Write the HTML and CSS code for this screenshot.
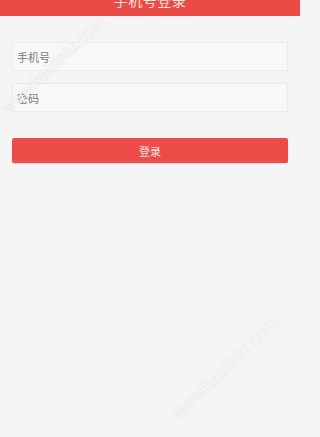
FILE: index.html
```html
<!DOCTYPE html>
<html lang="zh">
<head>
<meta charset="utf-8">
<title>手机号登录</title>
<link rel="stylesheet" href="styles.css">
</head>
<body>
<div class="page">
  <header class="topbar"><span class="title">手机号登录</span></header>
  <form class="form">
    <div class="field"><input class="input" type="text" placeholder="手机号"></div>
    <div class="field"><input class="input" type="password" placeholder="密码"></div>
    <button class="btn" type="button">登录</button>
  </form>
  <span class="wm wm1">www.kaixinlu.com</span>
  <span class="wm wm2">www.kaixinlu.com</span>
</div>
</body>
</html>
```
FILE: styles.css
```css
* { box-sizing: border-box; }
html, body { margin: 0; padding: 0; }
body {
  width: 300px;
  height: 437px;
  overflow: hidden;
  background: #f5f5f5;
  font-family: "Noto Sans CJK SC", "Noto Sans", sans-serif;
}
.page {
  position: relative;
  height: 437px;
  overflow: hidden;
}
.topbar {
  height: 16px;
  background: #ea4b46;
  display: flex;
  justify-content: center;
  overflow: hidden;
}
.title {
  color: #fbe4e2;
  font-size: 14px;
  line-height: 14px;
  margin-top: -7px;
  letter-spacing: 0.5px;
}
.form {
  display: flex;
  flex-direction: column;
  padding: 26px 12px 0;
}
.field { margin-bottom: 12px; }
.input {
  display: block;
  width: 100%;
  height: 29px;
  border: 1px solid #ebebeb;
  background: #f8f8f8;
  padding: 0 4px;
  font-family: inherit;
  font-size: 11px;
  outline: none;
}
.input::placeholder { color: #7a7a7a; }
.btn {
  margin-top: 14px;
  height: 25px;
  border: none;
  border-radius: 2px;
  background: #ed4c48;
  color: #fbe3e1;
  font-family: inherit;
  font-size: 11px;
  box-shadow: 0 1px 1px rgba(0,0,0,0.12);
}
.wm {
  position: absolute;
  font-family: "Liberation Sans", Arial, sans-serif;
  color: #fafafa;
  text-shadow: 0 0 1px #c4c4c4;
  white-space: nowrap;
  transform-origin: 0 100%;
  pointer-events: none;
}
.wm1 { left: 10px; top: 100px; font-size: 17px; line-height: 17px; transform: rotate(-43deg); }
.wm2 { left: 180px; top: 406px; font-size: 18px; line-height: 18px; transform: rotate(-44deg); }
```
